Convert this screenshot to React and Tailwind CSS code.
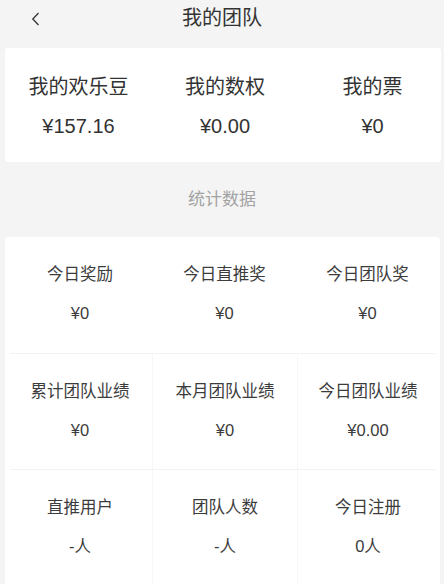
// App.jsx
// Pantalla "我的团队" — resumen de saldo y estadísticas del equipo

const summary = [
  { label: "我的欢乐豆", value: "¥157.16" },
  { label: "我的数权", value: "¥0.00" },
  { label: "我的票", value: "¥0" },
];

const stats = [
  [
    { label: "今日奖励", value: "¥0" },
    { label: "今日直推奖", value: "¥0" },
    { label: "今日团队奖", value: "¥0" },
  ],
  [
    { label: "累计团队业绩", value: "¥0" },
    { label: "本月团队业绩", value: "¥0" },
    { label: "今日团队业绩", value: "¥0.00" },
  ],
  [
    { label: "直推用户", value: "-人" },
    { label: "团队人数", value: "-人" },
    { label: "今日注册", value: "0人" },
  ],
];

function App() {
  return (
    <div
      className="w-[444px] h-[584px] overflow-hidden bg-[#f4f4f4] text-[#333]"
      style={{ fontFamily: '"Liberation Sans", "Noto Sans CJK SC", sans-serif' }}
    >
      {/* Cabecera */}
      <div className="relative h-[48px] flex justify-center pt-[4px]">
        <svg
          className="absolute left-[31px] top-[12px]"
          width="9"
          height="14"
          viewBox="0 0 9 14"
          fill="none"
          stroke="#333"
          strokeWidth="1.3"
        >
          <path d="M7.5 1 L1.8 7 L7.5 13" />
        </svg>
        <h1 className="text-[20px] leading-7">我的团队</h1>
      </div>

      {/* Resumen */}
      <div className="ml-[5px] mr-[3px] h-[114px] bg-white rounded-[3px] grid grid-cols-[147px_146px_1fr]">
        {summary.map((item, j) => (
          <div
            key={item.label}
            className={`flex flex-col items-center pt-[25px] ${j === 2 ? "pl-[6px]" : ""}`}
          >
            <p className="text-[20px] leading-7">{item.label}</p>
            <p className="text-[20px] leading-7 mt-[11px]">{item.value}</p>
          </div>
        ))}
      </div>

      <div className="h-[75px] flex items-center justify-center">
        <p className="text-[17px] text-[#a3a3a3]">统计数据</p>
      </div>

      {/* Estadísticas */}
      <div className="ml-[5px] mr-[4px] bg-white rounded-[4px]">
        {stats.map((row, i) => (
          <div key={i} className="px-[5px]">
            <div
              className={`grid grid-cols-[142px_145px_1fr] h-[116px] ${i > 0 ? "border-t border-[#f3f3f3]" : ""}`}
            >
              {row.map((item, j) => (
                <div
                  key={item.label}
                  className={`flex flex-col items-center pt-[25px] ${j > 0 && i > 0 ? "border-l border-[#f7f7f7]" : ""} ${j === 0 ? "pr-[2px]" : ""} ${j === 2 ? "pl-[3px]" : ""}`}
                >
                  <p className="text-[16.5px] leading-6 text-[#3c3c3c]">{item.label}</p>
                  <p className="text-[16.5px] leading-6 mt-[15px] text-[#3c3c3c]">{item.value}</p>
                </div>
              ))}
            </div>
          </div>
        ))}
      </div>
    </div>
  );
}

export default App;
